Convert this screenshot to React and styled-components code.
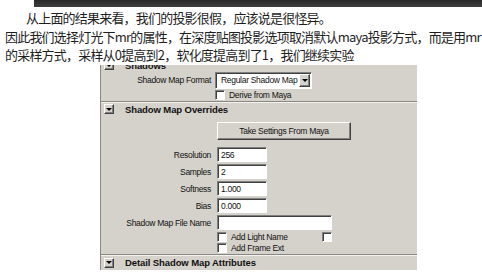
import React from "react";
import styled, { createGlobalStyle } from "styled-components";

const GlobalStyle = createGlobalStyle`
    html, body {
        margin: 0;
        padding: 0;
        background: #ffffff;
    }
    body {
        width: 482px;
        height: 272px;
        overflow: hidden;
    }
`;

const Page = styled.div`
    width: 482px;
    height: 272px;
    overflow: hidden;
    background: #fff;
`;

const TopBar = styled.div`
    margin-left: 34px;
    height: 7px;
    background: linear-gradient(#2a2a2a, #3e3e3e);
`;

const Article = styled.p`
    margin: 0;
    padding: 2px 0 0 5px;
    font-family: "Noto Sans CJK SC", "Noto Sans", sans-serif;
    font-size: 13px;
    letter-spacing: -0.8px;
    line-height: 18.5px;
    color: #1e1e1e;
    white-space: nowrap;
`;

const Indent = styled.span`
    display: inline-block;
    width: 21px;
`;

// the maya attribute editor crop
const Panel = styled.div`
    margin-left: 100px;
    width: 316px;
    height: 205px;
    overflow: hidden;
    background: #d5d2cb;
    border-left: 1px solid #8a8782;
    display: flex;
    flex-direction: column;
    font-family: "Liberation Sans", Arial, sans-serif;
    font-size: 8.5px;
    letter-spacing: -0.3px;
    color: #111;
`;

const SectionHeader = styled.div`
    display: flex;
    align-items: center;
    gap: 11px;
    height: ${(p) => p.$h || 14}px;
    margin-top: ${(p) => p.$top || 0}px;
    padding-left: 3px;
    font-size: 9.5px;
    font-weight: bold;
    letter-spacing: -0.1px;
    color: #111;
`;

const FoldButton = styled.span`
    width: 8px;
    height: 8px;
    flex: none;
    background: #d5d2cb;
    border: 1px solid;
    border-color: #fff #404040 #404040 #fff;
    box-shadow: inset -1px -1px 0 #808080;
    display: flex;
    align-items: center;
    justify-content: center;
    &::after {
        content: "";
        border-left: 3px solid transparent;
        border-right: 3px solid transparent;
        border-top: 3px solid #000;
    }
`;

const FormRow = styled.div`
    display: grid;
    grid-template-columns: 110px auto;
    column-gap: ${(p) => p.$gap ?? 6}px;
    align-items: center;
    height: ${(p) => p.$h || 15}px;
    margin-top: ${(p) => p.$top || 0}px;
`;

const Label = styled.span`
    text-align: right;
    white-space: nowrap;
`;

const Field = styled.div`
    box-sizing: border-box;
    width: ${(p) => p.$w}px;
    height: 15px;
    background: #fff;
    border: 1px solid;
    border-color: #808080 #fff #fff #808080;
    box-shadow: inset 1px 1px 0 #404040;
    padding: 0 3px;
    display: flex;
    align-items: center;
    color: #111;
`;

const Dropdown = styled.div`
    box-sizing: border-box;
    width: 97px;
    height: 17px;
    background: #fff;
    border: 1px solid;
    border-color: #808080 #fff #fff #808080;
    box-shadow: inset 1px 1px 0 #404040;
    display: flex;
    align-items: center;
    justify-content: space-between;
    padding: 1px 1px 1px 5px;
`;

const DropArrow = styled.span`
    width: 9px;
    height: 11px;
    background: #d5d2cb;
    border: 1px solid;
    border-color: #fff #404040 #404040 #fff;
    box-shadow: inset -1px -1px 0 #808080;
    display: flex;
    align-items: center;
    justify-content: center;
    &::after {
        content: "";
        border-left: 3px solid transparent;
        border-right: 3px solid transparent;
        border-top: 3px solid #000;
    }
`;

const CheckLine = styled.div`
    display: flex;
    align-items: center;
    justify-content: space-between;
    width: ${(p) => p.$w || 110}px;
    height: 10px;
    margin-top: ${(p) => p.$top || 0}px;
    margin-left: ${(p) => p.$left || 115}px;
`;

const CheckItem = styled.label`
    display: flex;
    align-items: center;
    gap: 4px;
    white-space: nowrap;
`;

const Checkbox = styled.span`
    box-sizing: border-box;
    width: 10px;
    height: 10px;
    flex: none;
    background: #fff;
    border: 1px solid;
    border-color: #808080 #fff #fff #808080;
    box-shadow: inset 1px 1px 0 #404040;
`;

const Separator = styled.div`
    height: 0;
    margin-top: ${(p) => p.$top || 0}px;
    border-top: 1px solid #8a8782;
    border-bottom: 1px solid #f4f3f0;
`;

const Button = styled.div`
    box-sizing: border-box;
    width: 134px;
    height: 19px;
    margin-top: 7px;
    margin-left: 116px;
    background: #d5d2cb;
    border: 1px solid;
    border-color: #fff #404040 #404040 #fff;
    box-shadow: inset -1px -1px 0 #808080;
    display: flex;
    align-items: center;
    justify-content: center;
    color: #111;
`;

const numericFields = [
    { label: "Resolution", value: "256", w: 50 },
    { label: "Samples", value: "2", w: 50 },
    { label: "Softness", value: "1.000", w: 50 },
    { label: "Bias", value: "0.000", w: 50 },
    { label: "Shadow Map File Name", value: "", w: 115 },
];

const App = () => {
    return (
        <Page>
            <GlobalStyle />
            <TopBar />
            <Article>
                <Indent />
                从上面的结果来看，我们的投影很假，应该说是很怪异。
                <br />
                因此我们选择灯光下mr的属性，在深度贴图投影选项取消默认maya投影方式，而是用mr
                <br />
                的采样方式，采样从0提高到2，软化度提高到了1，我们继续实验
            </Article>

            <Panel>
                <SectionHeader $top={-6}>
                    <FoldButton />
                    Shadows
                </SectionHeader>

                <FormRow $h={17} $gap={4}>
                    <Label>Shadow Map Format</Label>
                    <Dropdown>
                        Regular Shadow Map
                        <DropArrow />
                    </Dropdown>
                </FormRow>

                <CheckLine $top={1} $left={114}>
                    <CheckItem>
                        <Checkbox />
                        Derive from Maya
                    </CheckItem>
                </CheckLine>

                <Separator $top={1} />

                <SectionHeader $h={12} $top={1}>
                    <FoldButton />
                    Shadow Map Overrides
                </SectionHeader>

                <Button>Take Settings From Maya</Button>

                {numericFields.map((f, i) => (
                    <FormRow key={f.label} $top={i === 0 ? 7 : 2}>
                        <Label>{f.label}</Label>
                        <Field $w={f.w}>{f.value}</Field>
                    </FormRow>
                ))}

                <CheckLine $top={2} $w={115} $left={116}>
                    <CheckItem>
                        <Checkbox />
                        Add Light Name
                    </CheckItem>
                    <Checkbox />
                </CheckLine>
                <CheckLine $top={1} $left={116}>
                    <CheckItem>
                        <Checkbox />
                        Add Frame Ext
                    </CheckItem>
                </CheckLine>

                <Separator $top={1} />

                <SectionHeader>
                    <FoldButton />
                    Detail Shadow Map Attributes
                </SectionHeader>
            </Panel>
        </Page>
    );
};

export default App;
